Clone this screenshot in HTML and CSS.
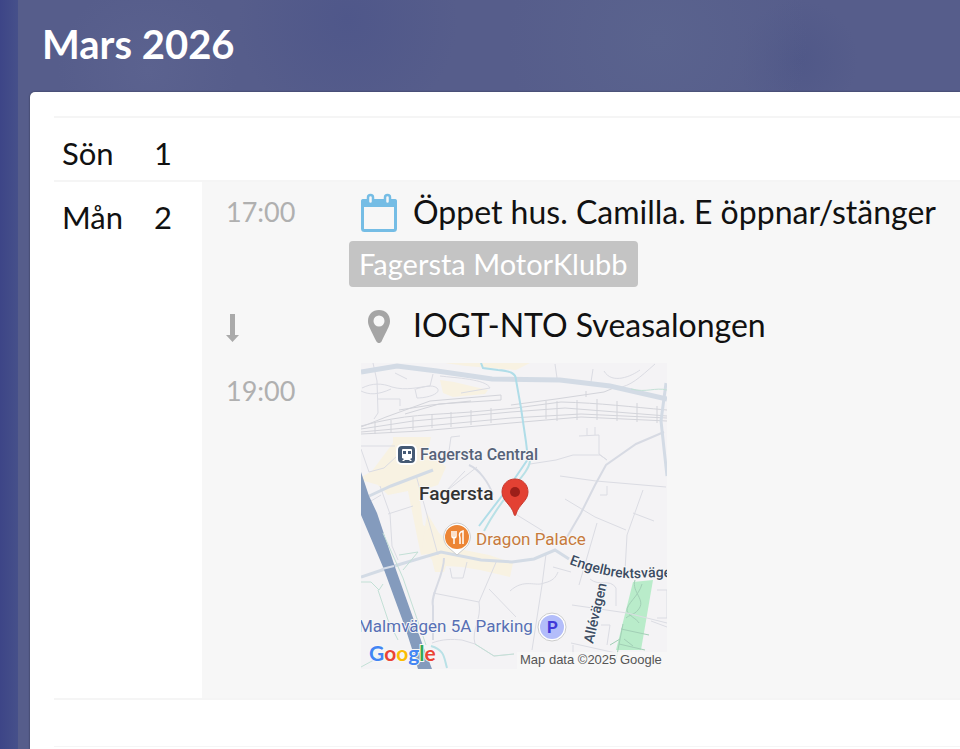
FILE: index.html
```
<!DOCTYPE html>
<html lang="sv">

<head>
    <meta charset="UTF-8">
    <meta name="viewport" content="width=device-width, initial-scale=1.0">
    <title>Kalender - Mars 2026</title>
    <link rel="stylesheet" href="styles.css">
</head>

<body>
    <main class="page">
        <h1 class="month">Mars 2026</h1>
        <div class="calendar">
            <section class="day">
                <div class="date"><span>Sön</span><span>1</span></div>
            </section>
            <section class="day">
                <div class="date"><span>Mån</span><span>2</span></div>
                <div class="event">
                    <time class="time">17:00</time>
                    <div class="line">
                        <svg class="icon" viewBox="0 0 36 40" aria-hidden="true">
                            <rect x="1.500" y="8.500" width="33" height="30" rx="2" fill="none" stroke="#75bde5" stroke-width="3" />
                            <path d="M0 15V9a2 2 0 0 1 2-2h32a2 2 0 0 1 2 2v6z" fill="#75bde5" />
                            <rect x="7" y="3" width="5" height="9" rx="2.500" fill="#f7f7f7" stroke="#75bde5" stroke-width="2.500" />
                            <rect x="24" y="3" width="5" height="9" rx="2.500" fill="#f7f7f7" stroke="#75bde5" stroke-width="2.500" />
                        </svg>
                        <span>Öppet hus. Camilla. E öppnar/stänger</span>
                    </div>
                    <div class="club"><span class="badge">Fagersta MotorKlubb</span></div>
                    <svg class="arrow" viewBox="0 0 13 34" aria-hidden="true">
                        <path d="M4 6h5v21h4l-6.500 7L0 27h4z" fill="#aaa" />
                    </svg>
                    <div class="line place">
                        <svg class="icon" viewBox="0 0 36 40" aria-hidden="true">
                            <path d="M18 5C11.500 5 7 9.500 7 16c0 4 1.500 6.500 8.300 20.200 1.200 2.400 4.200 2.400 5.400 0C27.500 22.500 29 20 29 16c0-6.500-4.500-11-11-11zm0 5.500a5.500 5.500 0 1 1 0 11 5.500 5.500 0 0 1 0-11z" fill="#a5a5a5" />
                        </svg>
                        <span>IOGT-NTO Sveasalongen</span>
                    </div>
                    <time class="time end">19:00</time>
                    <svg class="map" viewBox="0 0 306 306" role="img" aria-label="Karta över Fagersta">
                        <rect width="306" height="306" fill="#f4f3f5" />
                        <!-- built-up areas and park -->
                        <g fill="#f8f2e2">
                            <path d="M79 17l14 2 34 8-3 4-32 3-10-4zM84 0h85l-14 7-50-4z" />
                            <path d="M32 80l0-6h38l-3 14 18 16-8 18-19 6 4 34 14 8-2 20-14 2-3-14-10-50-20 4-10-10-20-6 14-8z" />
                            <path d="M66 150l12 20 20 16 30 6 24 8-3 14-30-7-18-3-16-1-2 6h-9l-3-12-10-12z" />
                        </g>
                        <path d="M272 219l20-2-12 70h-25z" fill="#b9ecca" />
                        <path d="M274 217c-4 12 12 20 3 30-4 5-9 5-12 8m-5 11l28 6m-30 9l26 6m-3-66c-3 12-16 20-15 27 2 5 10 8 12 12m-16 1l-7 36m4-21l-10 6m14-6l9 7" fill="none" stroke="#a2cfb6" />
                        <!-- minor roads -->
                        <g fill="none" stroke="#dbdce3">
                            <path d="M12 0l4 18 1 32-4 6M1 25c10-5 20-5 30-1 14 4 27 0 38-1l3-12M0 28c8 4 17 4 30-2M34 10l12 6M17 36h22v7M54 26l2 9c12 0 25-5 20-10-5-4-14-1-21 1M100 30l29-5c-4-9-34-10-50-12" />
                            <path d="M0 83h34M0 86l8 23 15-4 13-12M88 88l2-14 9-1M19 123l10 28 2 32 6 14M55 112l22 80M74 137l42-33M84 129l20-21M27 151l25-8M0 144l20-12" />
                            <path d="M194 1l2 14M232 6l-2 13M243 8c8 14 28 5 36-1M256 25c14-2 22-10 38-24M218 73l20-1v19l8 6M226 65v7M234 64v8M169 101l26-4 17-5 27 0 7 5M199 113l36 5 70 6M282 127l-16 45-2 36M204 136l30 18 31 13M272 150l21 8M239 132h7v-9" />
                            <path d="M185 191l-4 31-10 65M149 228c14-13 26-4 34-8 9-2 12-6 14-11M211 242l55 8 40 10M236 160l-18 62M246 224l-7 22M229 216c9 8 20-1 26 9v18M296 227h10v28h-10M210 280l45 10M290 258l16 6M212 282v10M240 262h9l-3 20" />
                            <path d="M72 230l46 9 18-42M118 239c3 17-8 28-4 42l19 12 20-2M128 226l27 28M71 280c10-4 20-4 30-3l13 4M89 205l2 10h11l4-16M156 152l26 16M192 204l18 5" />
                        </g>
                        <g fill="none" stroke="#d7dae3" stroke-width="2">
                            <path d="M303 69l-28 12-30 21-11 20-14 28-14 24M108 102c10 4 20 18 24 30M83 195c0 18-14 37-11 48v34" />
                        </g>
                        <!-- railway -->
                        <g fill="none" stroke="#d3d4da">
                            <path d="M0 63c44-12 70-11 110-14l45-4 45-6c40 1 70 5 106 8" />
                            <path d="M0 66l52-8 98-9 54-4 102 8" />
                            <path d="M0 69l55-5 95-9 70-4 86 4" />
                            <path d="M0 71l60-3 90-8 70-6 86 4" />
                            <path d="M0 64l25-10 44-16 71-6v5l-62 4-34 10M38 47l32-5 40-4M150 42l45-6 48-7 12-5" />
                            <path d="M30 57v13M52 54v13M71 51v14M90 49v15M110 47v15M130 45v15M196 38v20M216 37v20M236 36v21M256 38v20M276 40v19M296 43v17M225 28v6M185 38v18M14 59v12" />
                        </g>
                        <!-- main roads -->
                        <g fill="none" stroke="#d3dbe5">
                            <path d="M0 9l36-6 40 5 55 8 68 1 50 6 57 13" stroke-width="5" />
                            <path d="M305 20l-5 38 6 55" stroke-width="3" />
                            <path d="M0 214l30-10 50-15 40 8 31 2 22-3 21-9 14 9" stroke-width="3" />
                            <path d="M6 134l24-11 42-16" stroke-width="3" />
                        </g>
                        <!-- water -->
                        <path d="M0 109l8 24 8 17 18 54 27 76 10 26H57l-6-20-7-22-22-60L0 152z" fill="#849bbd" />
                        <path d="M21 206l12-3" stroke="#d5dce8" stroke-width="2" />
                        <path d="M120 0l2 5 15 2c12 1 18 3 18 10l5 28 5 34 2 17-17 25-32 42" fill="none" stroke="#b0dde8" stroke-width="2" />
                        <path d="M169 98c-2 15-24 28-46 70M70 283c14 4 13 12 16 22" fill="none" stroke="#b9e1e6" stroke-width="2" />
                        <path d="M22 170l20 45 23 67M38 192l19-3-15 18M0 219h10l8 8 4-6M17 227l10 30 10 20M114 281l19 12 20-2M270 26c16 4 24-2 36 1M0 304l22-12" fill="none" stroke="#c3e0d6" />
                        <!-- labels -->
                        <g class="map-text">
                            <rect x="36" y="82" width="19" height="19" rx="5" fill="#455a75" stroke="#fff" stroke-width="2" />
                            <path d="M42 86h8a1 1 0 0 1 1 1v8l-2 1 2 2h-2l-1-1h-4l-1 1h-2l2-2-2-1v-8a1 1 0 0 1 1-1z" fill="#fff" />
                            <path d="M42 88h3v3h-3zM47 88h3v3h-3z" fill="#455a75" />
                            <text class="station" x="59" y="97">Fagersta Central</text>
                            <text class="town" x="58" y="137">Fagersta</text>
                            <path d="M154 116c-8 0-13 6-13 13 0 9 9 12 12 22 0 2 2 2 2 0 3-10 12-13 12-22 0-7-5-13-13-13z" fill="#e34133" stroke="#c8392e" />
                            <circle cx="154" cy="129" r="5" fill="#9c1f19" />
                            <path d="M96 160a14 14 0 0 0-8 25l8 7 8-7a14 14 0 0 0-8-25z" fill="#fff" stroke="#ccc" />
                            <circle cx="96" cy="174" r="12" fill="#ec8536" />
                            <path d="M91 168v5q0 2 2 2v6M93 168v7M95 168v5q0 2-2 2M99 181v-6q-2-6 3-7v13" fill="none" stroke="#fff" stroke-width="1.500" />
                            <text class="food" x="115" y="182">Dragon Palace</text>
                            <path id="engelbrekt" d="M208 201C232 210 255 216 276 215S300 213 330 216" fill="none" />
                            <text class="road"><textPath href="#engelbrekt">Engelbrektsvägen</textPath></text>
                            <text class="road" transform="translate(232 281) rotate(-77)">Allévägen</text>
                            <text class="parking" x="-3" y="269">Malmvägen 5A Parking</text>
                            <circle cx="191" cy="264" r="14" fill="#fff" stroke="#ccc" />
                            <circle cx="191" cy="264" r="12" fill="#b3bdfa" />
                            <text class="p-sign" x="186" y="270">P</text>
                        </g>
                        <text class="google" x="8" y="298"><tspan fill="#4285f4">G</tspan><tspan fill="#ea4335">o</tspan><tspan fill="#fbbc05">o</tspan><tspan fill="#4285f4">g</tspan><tspan fill="#34a853">l</tspan><tspan fill="#ea4335">e</tspan></text>
                        <rect x="156" y="289" width="150" height="17" fill="#f7f7f7" fill-opacity="0.8" />
                        <text class="credit" x="159" y="301">Map data ©2025 Google</text>
                    </svg>
                </div>
            </section>
            <section class="day week-break"></section>
            <section class="day next-week"></section>
        </div>
    </main>
</body>

</html>
```
FILE: styles.css
```
body {
    font-family: Lato, "Open Sans", sans-serif;
    font-size: 31px;
    line-height: 40px;
    margin: 0;
    color: #111;
    background: linear-gradient(90deg, #3d4587, #46508a 18px, #454f8c);
    overflow-x: hidden;
}

.page {
    display: flex;
    flex-direction: column;
    box-sizing: border-box;
    min-height: 100vh;
    margin-left: 18px;
    padding-left: 12px;
    background:
        radial-gradient(circle at 130px 70px, #5b628f, transparent 90px),
        radial-gradient(circle at 330px 20px, #4f578a, transparent 110px),
        radial-gradient(circle at 640px 40px, #5a638e, transparent 150px),
        radial-gradient(circle at 780px 60px, #505888, transparent 60px),
        #565d8b;
}

.month {
    margin: 0;
    padding: 19px 12px 23px;
    font-size: 40px;
    line-height: 50px;
    color: #fff;
}

.calendar {
    flex: 1;
    padding: 24px 0 0 24px;
    background: #fff;
    border-top-left-radius: 5px;
    box-shadow: 0 0 2px rgba(0, 0, 0, 0.5);
}

.day {
    display: flex;
    min-height: 62px;
    border-top: 2px solid #f5f5f5;
}

.week-break {
    min-height: 46px;
}

.next-week {
    min-height: 0;
    border-top-width: 1px;
}

.date {
    display: flex;
    justify-content: space-between;
    width: 110px;
    padding: 15px 30px 0 8px;
}

.event {
    flex: 1;
    display: grid;
    grid-template-columns: 123px 1fr;
    grid-template-rows: 59px 46px 76px auto;
    align-items: center;
    padding: 0 0 29px 24px;
    background: #f7f7f7;
}

.time {
    font-size: 27px;
    line-height: 56px;
    color: #b0b0b0;
}

.end {
    align-self: start;
}

.line {
    display: flex;
    align-items: center;
    gap: 16px;
    padding-left: 12px;
    font-size: 32px;
    white-space: nowrap;
}

.icon {
    width: 36px;
    height: 40px;
}

.club {
    grid-column: 2;
}

.badge {
    display: block;
    width: fit-content;
    padding: 0 10px;
    font-size: 29px;
    line-height: 46px;
    color: #fff;
    background: #c4c4c4;
    border-radius: 4px;
}

.arrow {
    width: 13px;
    height: 34px;
}

.map {
    width: 306px;
    height: 306px;
    margin-left: 12px;
    overflow: hidden;
}

.map-text {
    font-family: Roboto, sans-serif;
    font-size: 17px;
}

.map text {
    paint-order: stroke;
    stroke: #f7f7f7;
    stroke-width: 2px;
}

.station {
    font-size: 16px;
    font-weight: 500;
    fill: #566379;
}

.town {
    font-size: 19px;
    font-weight: 500;
    fill: #333;
}

.food {
    fill: #c77a3c;
}

.road {
    font-size: 14px;
    font-weight: 500;
    fill: #3c4c63;
}

.parking {
    fill: #5770b5;
}

.map .p-sign {
    font-weight: 700;
    fill: #4038d8;
    stroke: none;
}

.google {
    font-family: Lato, sans-serif;
    font-size: 21px;
    font-weight: 700;
}

.credit {
    font-family: "Liberation Sans", Arial, sans-serif;
    font-size: 13px;
    fill: #555;
}
```
